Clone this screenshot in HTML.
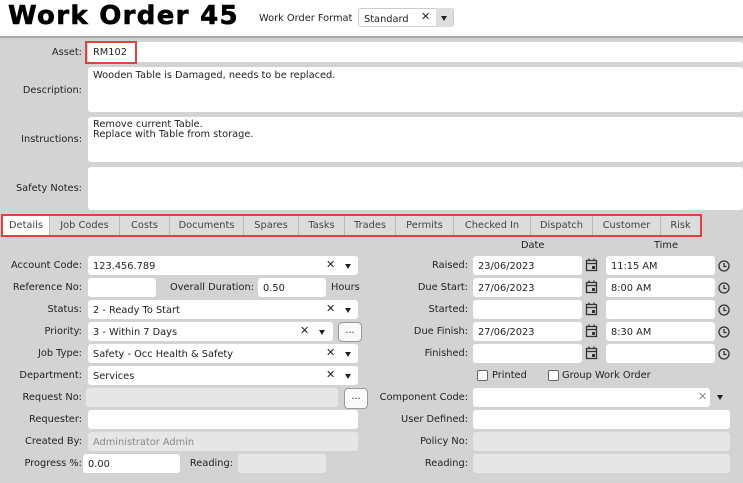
<!DOCTYPE html>
<html><head><style>
*{box-sizing:border-box;margin:0;padding:0}
body{width:743px;height:483px;background:#d3d3d3;font-family:"DejaVu Sans","Liberation Sans",sans-serif;font-size:9.8px;color:#222;position:relative;overflow:hidden}
.a{position:absolute;white-space:nowrap}
.top{position:absolute;left:0;top:0;width:743px;height:38px;background:#fff;border-bottom:2px solid #a9a9a9}
.in{position:absolute;background:#fff;border-radius:3px;height:19px;padding:5px 5px 3px;white-space:nowrap;line-height:12px}
.g{background:#e6e6e6;color:#888}
.l{position:absolute;text-align:right;white-space:nowrap}
.x{position:absolute;font-weight:bold;font-size:11px}
.dd{position:absolute;width:0;height:0;border-left:3.5px solid transparent;border-right:3.5px solid transparent;border-top:5px solid #222}
.btn{position:absolute;width:24px;height:20px;background:#fafafa;border:1px solid #999;border-radius:4px;text-align:center;line-height:16px}
.tabs{position:absolute;left:1px;top:214px;width:701px;height:23px;border:2px solid #e0413f;background:#dcdcdc}
.tab{position:absolute;top:0;height:19px;line-height:19px;border-right:1px solid #bbb;text-align:center;color:#444}
.cb{position:absolute;width:11px;height:11px;border:1px solid #666;background:#fff;border-radius:2px}
</style></head><body>
<div class="top"></div>
<div class="a" style="left:8px;top:1px;font-family:'DejaVu Sans',sans-serif;font-weight:bold;font-size:26px;color:#000;letter-spacing:1.3px;-webkit-text-stroke:0.6px #000">Work Order 45</div>
<div class="a" style="left:259px;top:13px">Work Order Format</div>
<div class="in" style="left:358px;top:8px;width:96px;border:1px solid #ccc;background:#fff">Standard</div>
<div class="x" style="left:421px;top:10px">✕</div>
<div class="a" style="left:436px;top:8px;width:17px;height:19px;background:#ddd"></div>
<div class="dd" style="left:441px;top:16px"></div>

<div class="l" style="right:661px;top:47px">Asset:</div>
<div class="in" style="left:88px;top:42px;width:655px;height:20px;padding-top:5px">RM102</div>
<div class="a" style="left:85px;top:41px;width:52px;height:23px;border:2px solid #e0413f"></div>
<div class="l" style="right:661px;top:85px">Description:</div>
<div class="in" style="left:88px;top:67px;width:655px;height:45px;padding-top:3px">Wooden Table is Damaged, needs to be replaced.</div>
<div class="l" style="right:661px;top:134px">Instructions:</div>
<div class="in" style="left:88px;top:117px;width:655px;height:45px;padding-top:3px;line-height:10px">Remove current Table.<br>Replace with Table from storage.</div>
<div class="l" style="right:661px;top:183px">Safety Notes:</div>
<div class="in" style="left:88px;top:167px;width:655px;height:43px"></div>

<div class="tabs">
<div class="tab" style="left:0;width:47px;background:#fff">Details</div>
<div class="tab" style="left:47px;width:70px">Job Codes</div>
<div class="tab" style="left:117px;width:50px">Costs</div>
<div class="tab" style="left:167px;width:74px">Documents</div>
<div class="tab" style="left:241px;width:55px">Spares</div>
<div class="tab" style="left:296px;width:46px">Tasks</div>
<div class="tab" style="left:342px;width:51px">Trades</div>
<div class="tab" style="left:393px;width:58px">Permits</div>
<div class="tab" style="left:451px;width:77px">Checked In</div>
<div class="tab" style="left:528px;width:62px">Dispatch</div>
<div class="tab" style="left:590px;width:68px">Customer</div>
<div class="tab" style="left:658px;width:39px;border-right:none">Risk</div>
</div>

<div class="a" style="left:521px;top:240px">Date</div>
<div class="a" style="left:654px;top:240px">Time</div>

<div class="l" style="right:661px;top:260px">Account Code:</div>
<div class="in" style="left:88px;top:256px;width:270px">123.456.789</div>
<div class="x" style="left:326px;top:258px">✕</div><div class="dd" style="left:345px;top:264px"></div>

<div class="l" style="right:661px;top:282px">Reference No:</div>
<div class="in" style="left:88px;top:278px;width:68px"></div>
<div class="l" style="right:489px;top:282px">Overall Duration:</div>
<div class="in" style="left:258px;top:278px;width:68px">0.50</div>
<div class="a" style="left:331px;top:282px">Hours</div>

<div class="l" style="right:661px;top:304px">Status:</div>
<div class="in" style="left:88px;top:300px;width:270px">2 - Ready To Start</div>
<div class="x" style="left:326px;top:302px">✕</div><div class="dd" style="left:345px;top:308px"></div>

<div class="l" style="right:661px;top:326px">Priority:</div>
<div class="in" style="left:88px;top:322px;width:245px">3 - Within 7 Days</div>
<div class="x" style="left:300px;top:324px">✕</div><div class="dd" style="left:319px;top:330px"></div>
<div class="btn" style="left:338px;top:322px">...</div>

<div class="l" style="right:661px;top:348px">Job Type:</div>
<div class="in" style="left:88px;top:344px;width:270px">Safety - Occ Health &amp; Safety</div>
<div class="x" style="left:326px;top:346px">✕</div><div class="dd" style="left:345px;top:352px"></div>

<div class="l" style="right:661px;top:370px">Department:</div>
<div class="in" style="left:88px;top:366px;width:270px">Services</div>
<div class="x" style="left:326px;top:368px">✕</div><div class="dd" style="left:345px;top:374px"></div>

<div class="l" style="right:661px;top:392px">Request No:</div>
<div class="in g" style="left:86px;top:388px;width:252px"></div>
<div class="btn" style="left:344px;top:388px;height:21px">...</div>

<div class="l" style="right:661px;top:414px">Requester:</div>
<div class="in" style="left:88px;top:410px;width:270px"></div>

<div class="l" style="right:661px;top:436px">Created By:</div>
<div class="in g" style="left:88px;top:432px;width:270px">Administrator Admin</div>

<div class="l" style="right:661px;top:458px">Progress %:</div>
<div class="in" style="left:83px;top:454px;width:97px">0.00</div>
<div class="l" style="right:510px;top:458px">Reading:</div>
<div class="in g" style="left:238px;top:454px;width:88px"></div>

<div class="l" style="right:275px;top:260px">Raised:</div>
<div class="l" style="right:275px;top:282px">Due Start:</div>
<div class="l" style="right:275px;top:304px">Started:</div>
<div class="l" style="right:275px;top:326px">Due Finish:</div>
<div class="l" style="right:275px;top:348px">Finished:</div>
<div class="in" style="left:473px;top:256px;width:109px">23/06/2023</div>
<div class="in" style="left:473px;top:278px;width:109px">27/06/2023</div>
<div class="in" style="left:473px;top:300px;width:109px"></div>
<div class="in" style="left:473px;top:322px;width:109px">27/06/2023</div>
<div class="in" style="left:473px;top:344px;width:109px"></div>
<div class="in" style="left:606px;top:256px;width:109px">11:15 AM</div>
<div class="in" style="left:606px;top:278px;width:109px">8:00 AM</div>
<div class="in" style="left:606px;top:300px;width:109px"></div>
<div class="in" style="left:606px;top:322px;width:109px">8:30 AM</div>
<div class="in" style="left:606px;top:344px;width:109px"></div>
<svg class="a" style="left:0;top:0" width="743" height="483">
<g fill="none" stroke="#333" stroke-width="1.3">
<g id="c"><rect x="586.5" y="260.5" width="10" height="10"/><line x1="586" y1="263.5" x2="597" y2="263.5"/><line x1="589" y1="258.5" x2="589" y2="261"/><line x1="594" y1="258.5" x2="594" y2="261"/><rect x="592" y="266" width="3" height="3" fill="#333" stroke="none"/></g>
<use href="#c" y="22"/><use href="#c" y="44"/><use href="#c" y="66"/><use href="#c" y="88"/>
<g id="k"><circle cx="724" cy="266" r="5"/><path d="M724 263v3.5h2.5"/></g>
<use href="#k" y="22"/><use href="#k" y="44"/><use href="#k" y="66"/><use href="#k" y="88"/>
</g></svg>
<div class="cb" style="left:477px;top:370px"></div>
<div class="a" style="left:492px;top:370px">Printed</div>
<div class="cb" style="left:548px;top:370px"></div>
<div class="a" style="left:562px;top:370px">Group Work Order</div>

<div class="l" style="right:275px;top:392px">Component Code:</div>
<div class="in" style="left:473px;top:388px;width:237px"></div>
<div class="a" style="left:698px;top:390px;font-size:11px;color:#888">✕</div><div class="dd" style="left:717px;top:395px"></div>
<div class="l" style="right:275px;top:414px">User Defined:</div>
<div class="in" style="left:473px;top:410px;width:257px"></div>
<div class="l" style="right:275px;top:436px">Policy No:</div>
<div class="in g" style="left:473px;top:432px;width:257px"></div>
<div class="l" style="right:275px;top:458px">Reading:</div>
<div class="in g" style="left:473px;top:454px;width:257px"></div>
</body></html>
